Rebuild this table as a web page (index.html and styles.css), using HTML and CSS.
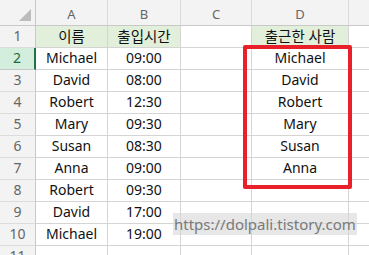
FILE: index.html
```html
<!DOCTYPE html>
<html lang="ko">
<head>
<meta charset="utf-8">
<link rel="stylesheet" href="styles.css">
</head>
<body>
<div class="sheet">
  <div class="grid">
    <div class="corner"><svg width="36" height="26" viewBox="0 0 36 26"><polygon points="19,21 31,21 31,9" fill="#bcbcbc"/></svg></div>
    <div class="ch">A</div><div class="ch">B</div><div class="ch">C</div><div class="ch">D</div><div class="ch last"></div>

    <div class="rh">1</div><div class="c fill ko">이름</div><div class="c fill ko">출입시간</div><div class="c"></div><div class="c fill ko">출근한 사람</div><div class="c last"></div>
    <div class="rh sel">2</div><div class="c">Michael</div><div class="c">09:00</div><div class="c"></div><div class="c">Michael</div><div class="c last"></div>
    <div class="rh">3</div><div class="c">David</div><div class="c">08:00</div><div class="c"></div><div class="c">David</div><div class="c last"></div>
    <div class="rh">4</div><div class="c">Robert</div><div class="c">12:30</div><div class="c"></div><div class="c">Robert</div><div class="c last"></div>
    <div class="rh">5</div><div class="c">Mary</div><div class="c">09:30</div><div class="c"></div><div class="c">Mary</div><div class="c last"></div>
    <div class="rh">6</div><div class="c">Susan</div><div class="c">08:30</div><div class="c"></div><div class="c">Susan</div><div class="c last"></div>
    <div class="rh">7</div><div class="c">Anna</div><div class="c">09:00</div><div class="c"></div><div class="c">Anna</div><div class="c last"></div>
    <div class="rh">8</div><div class="c">Robert</div><div class="c">09:30</div><div class="c"></div><div class="c"></div><div class="c last"></div>
    <div class="rh">9</div><div class="c">David</div><div class="c">17:00</div><div class="c"></div><div class="c"></div><div class="c last"></div>
    <div class="rh">10</div><div class="c">Michael</div><div class="c">19:00</div><div class="c"></div><div class="c"></div><div class="c last"></div>
    <div class="rh">11</div><div class="c"></div><div class="c"></div><div class="c"></div><div class="c"></div><div class="c last"></div>
  </div>
  <div class="mark"></div>
  <div class="watermark">https://dolpali.tistory.com</div>
</div>
</body>
</html>
```

FILE: styles.css
```css
html, body {
  margin: 0;
  padding: 0;
  background: #ffffff;
  overflow: hidden;
}

.sheet {
  position: relative;
  width: 369px;
  height: 255px;
  overflow: hidden;
  font-family: "Noto Sans", "Noto Sans CJK KR", sans-serif;
}

.grid {
  display: grid;
  grid-template-columns: 36px 72px 73px 71px 97px 1fr;
  grid-template-rows: 26px repeat(11, 22px);
}

.corner,
.ch,
.rh {
  background: #f3f3f3;
  color: #666666;
  box-sizing: border-box;
}

.corner {
  border-right: 1px solid #c8c8c8;
  border-bottom: 1px solid #c8c8c8;
}

.corner svg {
  display: block;
}

.ch {
  border-right: 1px solid #dcdcdc;
  border-bottom: 1px solid #c8c8c8;
  display: flex;
  align-items: flex-end;
  justify-content: center;
  font-size: 13px;
  line-height: 16px;
  padding-bottom: 3px;
}

.ch.last {
  border-right: none;
}

.rh {
  border-right: 1px solid #c8c8c8;
  border-bottom: 1px solid #dcdcdc;
  display: flex;
  align-items: flex-end;
  justify-content: center;
  font-size: 14px;
  line-height: 18px;
  padding-bottom: 2px;
}

.rh.sel {
  background: #d3eedd;
  color: #1e6b3e;
  border-right: 2px solid #217346;
  border-bottom-color: #c8c8c8;
}

.c {
  box-sizing: border-box;
  border-right: 1px solid #d4d4d4;
  border-bottom: 1px solid #d4d4d4;
  display: flex;
  align-items: flex-end;
  justify-content: center;
  font-size: 14px;
  line-height: 18px;
  padding-bottom: 2px;
  color: #111111;
  white-space: nowrap;
}

.c.ko {
  font-size: 14.5px;
}

.c.last {
  border-right: none;
}

.c.fill {
  background: #e2efda;
}

.mark {
  position: absolute;
  left: 243px;
  top: 45px;
  width: 109px;
  height: 144px;
  box-sizing: border-box;
  border: 4px solid #e8202a;
  border-radius: 2px;
}

.watermark {
  position: absolute;
  left: 173px;
  top: 213px;
  width: 184px;
  height: 22px;
  background: rgba(215, 215, 215, 0.6);
  color: #7a7a7a;
  font-size: 15px;
  line-height: 22px;
  padding-left: 1px;
  box-sizing: border-box;
  white-space: nowrap;
}
```
